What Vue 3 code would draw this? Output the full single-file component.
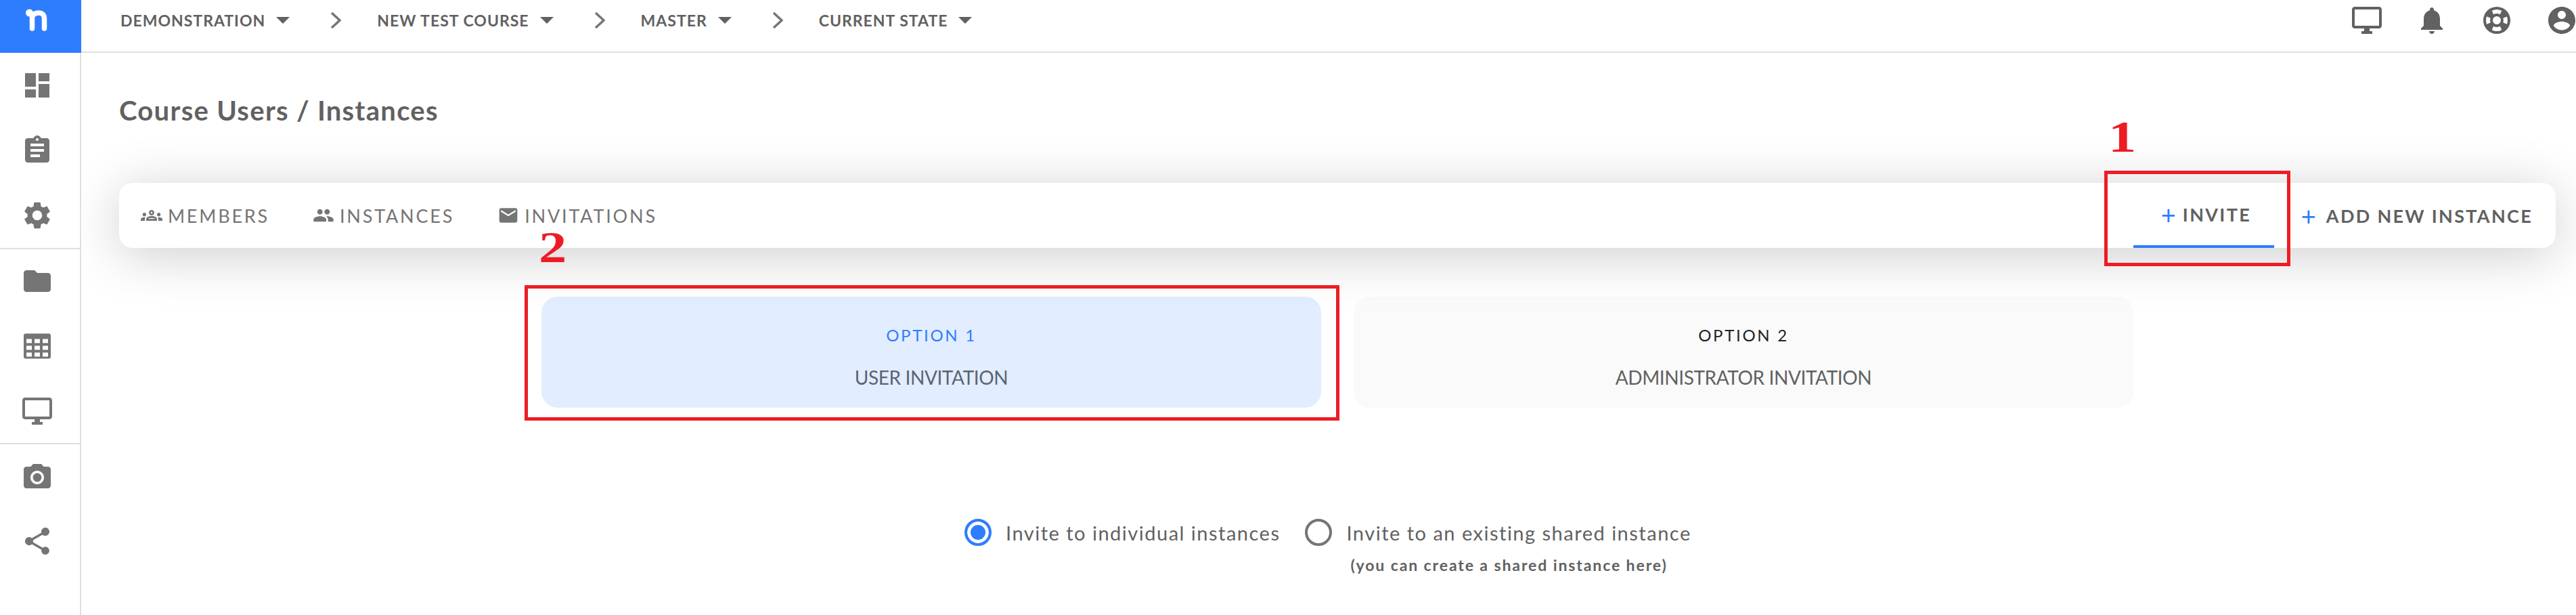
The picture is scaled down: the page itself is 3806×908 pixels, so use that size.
<template>
  <div class="app">
    <aside class="sidebar">
      <div class="logo">
        <svg width="36" height="38" viewBox="0 0 36 38">
          <circle cx="7.500" cy="8" r="5.500" fill="#fff" />
          <path d="M7 8C10 8 11.500 10 11.500 14V31M11.500 14C13 10 17 8 21 8C26 8 29.500 11 29.500 16V31" fill="none" stroke="#fff" stroke-width="7.500" stroke-linecap="round" />
        </svg>
      </div>
      <div class="side-group g1">
        <svg v-for="p in group1" :key="p" class="side-icon" viewBox="0 0 24 24"><path :d="p" /></svg>
      </div>
      <div class="side-group g2">
        <svg class="side-icon" viewBox="0 0 24 24"><path d="M10 4H4c-1.100 0-1.990.9-1.990 2L2 18c0 1.100.9 2 2 2h16c1.100 0 2-.9 2-2V8c0-1.100-.9-2-2-2h-8l-2-2z" /></svg>
        <svg class="side-icon" viewBox="0 0 24 24"><path fill-rule="evenodd" d="M3.500 2.750h17a1.500 1.500 0 0 1 1.500 1.500v15.500a1.500 1.500 0 0 1-1.500 1.500h-17a1.500 1.500 0 0 1-1.500-1.500V4.250a1.500 1.500 0 0 1 1.500-1.500zM4 6.750v3h4v-3zM10 6.750v3h4v-3zM16 6.750v3h4v-3zM4 11.750v3h4v-3zM10 11.750v3h4v-3zM16 11.750v3h4v-3zM4 16.750v3h4v-3zM10 16.750v3h4v-3zM16 16.750v3h4v-3z" /></svg>
        <svg class="side-icon" viewBox="0 0 24 24"><path :d="monitor" /></svg>
      </div>
      <div class="side-group g3">
        <svg class="side-icon" viewBox="0 0 24 24"><circle cx="12" cy="12" r="3.200" /><path d="M9 2L7.170 4H4c-1.100 0-2 .9-2 2v12c0 1.100.9 2 2 2h16c1.100 0 2-.9 2-2V6c0-1.100-.9-2-2-2h-3.170L15 2H9zm3 15c-2.760 0-5-2.240-5-5s2.240-5 5-5 5 2.240 5 5-2.240 5-5 5z" /></svg>
        <svg class="side-icon" viewBox="0 0 24 24"><path d="M18 16.080c-.76 0-1.440.3-1.960.77L8.910 12.700c.05-.23.09-.46.09-.7s-.04-.47-.09-.7l7.050-4.110c.54.5 1.250.81 2.040.81 1.660 0 3-1.340 3-3s-1.340-3-3-3-3 1.340-3 3c0 .24.04.47.09.7L8.040 9.810C7.500 9.310 6.790 9 6 9c-1.660 0-3 1.340-3 3s1.340 3 3 3c.79 0 1.500-.31 2.040-.81l7.120 4.160c-.05.21-.08.43-.08.65 0 1.610 1.310 2.920 2.920 2.920s2.920-1.310 2.920-2.920-1.310-2.920-2.920-2.920z" /></svg>
      </div>
    </aside>

    <div class="main">
      <header class="topbar">
        <nav class="crumbs">
          <template v-for="(c, i) in crumbs" :key="c">
            <span class="crumb">{{ c }}<i class="caret"></i></span>
            <svg v-if="i < crumbs.length - 1" class="chev" viewBox="0 0 16 24"><path d="M2 1L14 12L2 23" /></svg>
          </template>
        </nav>
        <div class="top-icons">
          <svg class="top-icon" viewBox="0 0 24 24"><path :d="monitor" /></svg>
          <svg class="top-icon" viewBox="0 0 24 24"><path d="M12 22c1.100 0 2-.9 2-2h-4c0 1.100.9 2 2 2zm6-6v-5c0-3.070-1.630-5.640-4.500-6.320V4c0-.83-.67-1.500-1.500-1.500s-1.500.67-1.500 1.500v.68C7.640 5.360 6 7.920 6 11v5l-2 2v1h16v-1l-2-2z" /></svg>
          <svg class="top-icon" viewBox="0 0 24 24"><path fill-rule="evenodd" d="M12 2a10 10 0 1 0 0 20a10 10 0 0 0 0-20zM19.460 14.830l-2.780-1.150a4.980 4.980 0 0 0-.01-3.340l2.780-1.150a7.990 7.990 0 0 1 .01 5.640zM15.600 4.870l-1.150 2.780a5 5 0 0 0-4.920.02L8.380 4.870a7.950 7.950 0 0 1 7.220 0zM4.540 9.170l2.790 1.150a5 5 0 0 0 0 3.370l-2.790 1.150a7.990 7.990 0 0 1 0-5.670zM8.380 19.130l1.150-2.790a5 5 0 0 0 4.940 0l1.150 2.790a7.960 7.960 0 0 1-7.240 0zM12 9a3 3 0 1 1 0 6a3 3 0 0 1 0-6z" /></svg>
          <svg class="top-icon" viewBox="0 0 24 24"><path d="M12 2C6.480 2 2 6.480 2 12s4.480 10 10 10 10-4.480 10-10S17.520 2 12 2zm0 3c1.660 0 3 1.340 3 3s-1.340 3-3 3-3-1.340-3-3 1.340-3 3-3zm0 14.200c-2.500 0-4.710-1.280-6-3.220.03-1.990 4-3.080 6-3.080 1.990 0 5.970 1.090 6 3.080-1.290 1.940-3.500 3.220-6 3.220z" /></svg>
        </div>
      </header>

      <section class="content">
        <h1 class="title">Course Users / Instances</h1>

        <div class="tabbar">
          <div class="tabs">
            <a class="tab"><svg class="tab-icon" viewBox="0 0 24 24"><path d="M4 13c1.100 0 2-.9 2-2s-.9-2-2-2-2 .9-2 2 .9 2 2 2zm1.130 1.100C4.760 14.040 4.390 14 4 14c-.99 0-1.930.21-2.780.58C.48 14.900 0 15.620 0 16.430V18h4.500v-1.610c0-.83.23-1.610.63-2.290zM20 13c1.100 0 2-.9 2-2s-.9-2-2-2-2 .9-2 2 .9 2 2 2zm4 3.430c0-.81-.48-1.530-1.220-1.850C21.930 14.210 20.990 14 20 14c-.39 0-.76.04-1.130.1.4.68.63 1.460.63 2.290V18H24v-1.570zM16.240 13.650c-1.170-.52-2.610-.9-4.240-.9s-3.070.39-4.240.9C6.680 14.130 6 15.210 6 16.390V18h12v-1.610c0-1.180-.68-2.260-1.760-2.740zM8.070 16c.09-.23.13-.39.91-.69.97-.38 1.990-.56 3.020-.56s2.050.18 3.020.56c.77.3.81.46.91.69H8.070zM12 8c.55 0 1 .45 1 1s-.45 1-1 1-1-.45-1-1 .45-1 1-1m0-2c-1.660 0-3 1.340-3 3s1.340 3 3 3 3-1.340 3-3-1.340-3-3-3z" /></svg>MEMBERS</a>
            <a class="tab"><svg class="tab-icon" viewBox="0 0 24 24"><path d="M16 11c1.660 0 2.990-1.340 2.990-3S17.660 5 16 5c-1.660 0-3 1.340-3 3s1.340 3 3 3zm-8 0c1.660 0 2.990-1.340 2.990-3S9.660 5 8 5C6.340 5 5 6.340 5 8s1.340 3 3 3zm0 2c-2.330 0-7 1.170-7 3.500V19h14v-2.500c0-2.330-4.670-3.500-7-3.500zm8 0c-.29 0-.62.02-.97.050 1.160.84 1.970 1.970 1.970 3.450V19h6v-2.500c0-2.330-4.670-3.500-7-3.500z" /></svg>INSTANCES</a>
            <a class="tab"><svg class="tab-icon" viewBox="0 0 24 24"><path d="M20 4H4c-1.100 0-1.990.9-1.990 2L2 18c0 1.100.9 2 2 2h16c1.100 0 2-.9 2-2V6c0-1.100-.9-2-2-2zm0 4l-8 5-8-5V6l8 5 8-5v2z" /></svg>INVITATIONS</a>
          </div>
          <div class="actions">
            <a class="action active"><span class="plus">+</span>INVITE</a>
            <a class="action"><span class="plus">+</span>ADD NEW INSTANCE</a>
          </div>
          <div class="mark box1"></div>
          <span class="mark-num num1">1</span>
          <span class="mark-num num2">2</span>
        </div>

        <div class="options">
          <div class="option selected">
            <div class="mark box2"></div>
            <span class="opt-label">OPTION 1</span>
            <span class="opt-name">USER INVITATION</span>
          </div>
          <div class="option">
            <span class="opt-label">OPTION 2</span>
            <span class="opt-name">ADMINISTRATOR INVITATION</span>
          </div>
        </div>

        <div class="radios">
          <label class="radio on"><i class="dot"></i>Invite to individual instances</label>
          <div class="radio-col">
            <label class="radio"><i class="dot"></i>Invite to an existing shared instance</label>
            <small class="note">(you can create a shared instance here)</small>
          </div>
        </div>
      </section>
    </div>
  </div>
</template>

<script setup>
const crumbs = ["DEMONSTRATION", "NEW TEST COURSE", "MASTER", "CURRENT STATE"];

const monitor = "M21 2H3c-1.100 0-2 .9-2 2v12c0 1.100.9 2 2 2h7v2H8v2h8v-2h-2v-2h7c1.100 0 2-.9 2-2V4c0-1.100-.9-2-2-2zm0 14H3V4h18v12z";

const group1 = [
  "M3 13h8V3H3v10zm0 8h8v-6H3v6zm10 0h8V11h-8v10zm0-18v6h8V3h-8z",
  "M19 3h-4.180C14.400 1.840 13.300 1 12 1c-1.300 0-2.400.84-2.820 2H5c-1.100 0-2 .9-2 2v14c0 1.100.9 2 2 2h14c1.100 0 2-.9 2-2V5c0-1.100-.9-2-2-2zm-7 0c.55 0 1 .45 1 1s-.45 1-1 1-1-.45-1-1 .45-1 1-1zm2 14H7v-2h7v2zm3-4H7v-2h10v2zm0-4H7V7h10v2z",
  "M19.140 12.940c.04-.3.060-.61.060-.94 0-.32-.02-.64-.07-.94l2.030-1.580c.18-.14.23-.41.120-.61l-1.920-3.320c-.12-.22-.37-.29-.59-.22l-2.390.96c-.5-.38-1.030-.7-1.620-.94l-.36-2.540c-.04-.24-.24-.41-.48-.41h-3.840c-.24 0-.43.17-.47.41l-.36 2.540c-.59.24-1.130.57-1.620.94l-2.390-.96c-.22-.08-.47 0-.59.22L2.740 8.870c-.12.21-.08.47.12.61l2.030 1.580c-.05.3-.09.63-.09.94s.02.64.07.94l-2.030 1.580c-.18.14-.23.41-.12.61l1.920 3.320c.12.22.37.29.59.22l2.390-.96c.5.38 1.030.7 1.620.94l.36 2.540c.05.24.24.41.48.41h3.840c.24 0 .44-.17.47-.41l.36-2.540c.59-.24 1.130-.56 1.620-.94l2.390.96c.22.08.47 0 .59-.22l1.920-3.320c.12-.22.07-.47-.12-.61l-2.010-1.580zM12 15.600c-1.980 0-3.600-1.620-3.600-3.600s1.620-3.600 3.600-3.600 3.600 1.620 3.600 3.600-1.620 3.600-3.600 3.600z",
];
</script>

<style>
html,
body {
  margin: 0;
  background: #fff;
}
</style>

<style scoped>
* {
  box-sizing: border-box;
}

.app {
  display: flex;
  width: 3806px;
  height: 908px;
  overflow: hidden;
  font-family: "Lato", "Noto Sans", sans-serif;
  color: #666;
}

/* sidebar */
.sidebar {
  flex: none;
  width: 120px;
  border-right: 2px solid #e0e0e0;
  background: #fff;
  position: relative;
  z-index: 2;
}

.logo {
  height: 78px;
  margin-right: -2px;
  background: #2f7dff;
  padding: 11px 0 0 36px;
}

.side-group {
  display: flex;
  flex-direction: column;
  gap: 48px;
  padding-left: 31px;
}

.g1 {
  height: 290px;
  padding-top: 24px;
  border-bottom: 2px solid #e0e0e0;
}

.g2 {
  height: 288px;
  padding-top: 23px;
  border-bottom: 2px solid #e0e0e0;
}

.g3 {
  padding-top: 25px;
  gap: 46px;
}

.side-icon {
  flex: none;
  width: 48px;
  height: 48px;
  fill: #757575;
}

/* top bar */
.main {
  flex: 1;
  min-width: 0;
}

.topbar {
  height: 78px;
  border-bottom: 2px solid #e0e0e0;
  display: flex;
  justify-content: space-between;
  padding-left: 58px;
  position: relative;
  z-index: 1;
  background: #fff;
}

.crumbs {
  display: flex;
  align-items: center;
  height: 60px;
  gap: 53px;
}

.crumb {
  display: flex;
  align-items: center;
  font-size: 23px;
  font-weight: 700;
  letter-spacing: 1px;
  color: #616161;
}

.caret {
  width: 0;
  height: 0;
  margin-left: 16px;
  border-left: 10px solid transparent;
  border-right: 10px solid transparent;
  border-top: 10px solid #616161;
}

.chev {
  width: 16px;
  height: 24px;
  margin-left: 7px;
  fill: none;
  stroke: #757575;
  stroke-width: 3.500;
}

.top-icons {
  display: flex;
  gap: 48px;
  height: 60px;
  margin-right: -3px;
  padding-top: 6px;
}

.top-icon {
  width: 48px;
  height: 48px;
  fill: #616161;
}

/* page */
.content {
  padding-top: 62px;
}

.title {
  margin: 0 0 0 56px;
  font-size: 40px;
  line-height: 46px;
  font-weight: 700;
  letter-spacing: 1.300px;
  color: #616161;
}

.tabbar {
  position: relative;
  display: flex;
  justify-content: space-between;
  width: 3600px;
  height: 96px;
  margin: 84px 0 0 56px;
  background: #fff;
  border-radius: 20px;
  box-shadow: 0 10px 80px rgba(0, 0, 0, 0.2);
}

.tabs {
  display: flex;
  align-items: center;
  gap: 64px;
  padding-left: 32px;
}

.tab {
  display: flex;
  align-items: center;
  gap: 8px;
  font-size: 27px;
  font-weight: 400;
  letter-spacing: 2.800px;
  color: #757575;
}

.tab-icon {
  width: 32px;
  height: 32px;
  fill: #757575;
}

.actions {
  display: flex;
  padding-right: 34px;
}

.action {
  display: flex;
  align-items: center;
  font-size: 27px;
  font-weight: 700;
  letter-spacing: 2.300px;
  color: #616161;
  height: 96px;
}

.action.active {
  width: 208px;
  margin-right: 40px;
  padding-left: 41px;
  border-bottom: 4px solid #2f7dff;
}

.plus {
  margin-right: 15px;
  font-size: 38px;
  font-weight: 400;
  color: #2f7dff;
  letter-spacing: 0;
}

.active .plus {
  margin-right: 10px;
}

/* annotations laid over the screenshot */
.mark {
  position: absolute;
  border: 5px solid #ed1c24;
  pointer-events: none;
}

.box1 {
  left: 2933px;
  top: -18px;
  width: 275px;
  height: 141px;
}

.box2 {
  left: -25px;
  top: -17px;
  width: 1204px;
  height: 200px;
}

.mark-num {
  position: absolute;
  font-family: "Liberation Serif", serif;
  font-weight: 700;
  font-size: 66px;
  line-height: 66px;
  color: #ed1c24;
  transform: scaleX(1.250);
  transform-origin: left;
}

.num1 {
  left: 2939px;
  top: -101px;
}

.num2 {
  left: 620px;
  top: 62px;
}

/* option cards */
.options {
  display: flex;
  gap: 48px;
  margin: 72px 0 0 680px;
}

.option {
  position: relative;
  width: 1152px;
  height: 164px;
  border-radius: 24px;
  background: rgba(240, 240, 240, 0.3);
  display: flex;
  flex-direction: column;
  align-items: center;
  padding-top: 42px;
  color: #616161;
}

.option.selected {
  background: rgba(47, 125, 255, 0.14);
}

.opt-label {
  font-size: 24px;
  line-height: 30px;
  letter-spacing: 2.700px;
  color: #222;
}

.selected .opt-label {
  color: #2f7dff;
}

.opt-name {
  margin-top: 29px;
  font-size: 28px;
  line-height: 36px;
  letter-spacing: -0.400px;
}

.selected .opt-name {
  color: #5a6472;
}

/* radios */
.radios {
  display: flex;
  gap: 37px;
  margin: 164px 0 0 1305px;
}

.radio {
  display: flex;
  align-items: center;
  gap: 21px;
  height: 40px;
  font-size: 29px;
  letter-spacing: 1.500px;
  color: #616161;
}

.dot {
  width: 40px;
  height: 40px;
  border-radius: 50%;
  border: 4px solid #757575;
}

.on .dot {
  border-color: #2f7dff;
  background: #2f7dff;
  box-shadow: inset 0 0 0 5px #fff;
}

.radio-col {
  display: flex;
  flex-direction: column;
}

.note {
  margin: 13px 0 0 67px;
  font-size: 23px;
  line-height: 30px;
  font-weight: 700;
  letter-spacing: 1.900px;
  color: #616161;
}
</style>
